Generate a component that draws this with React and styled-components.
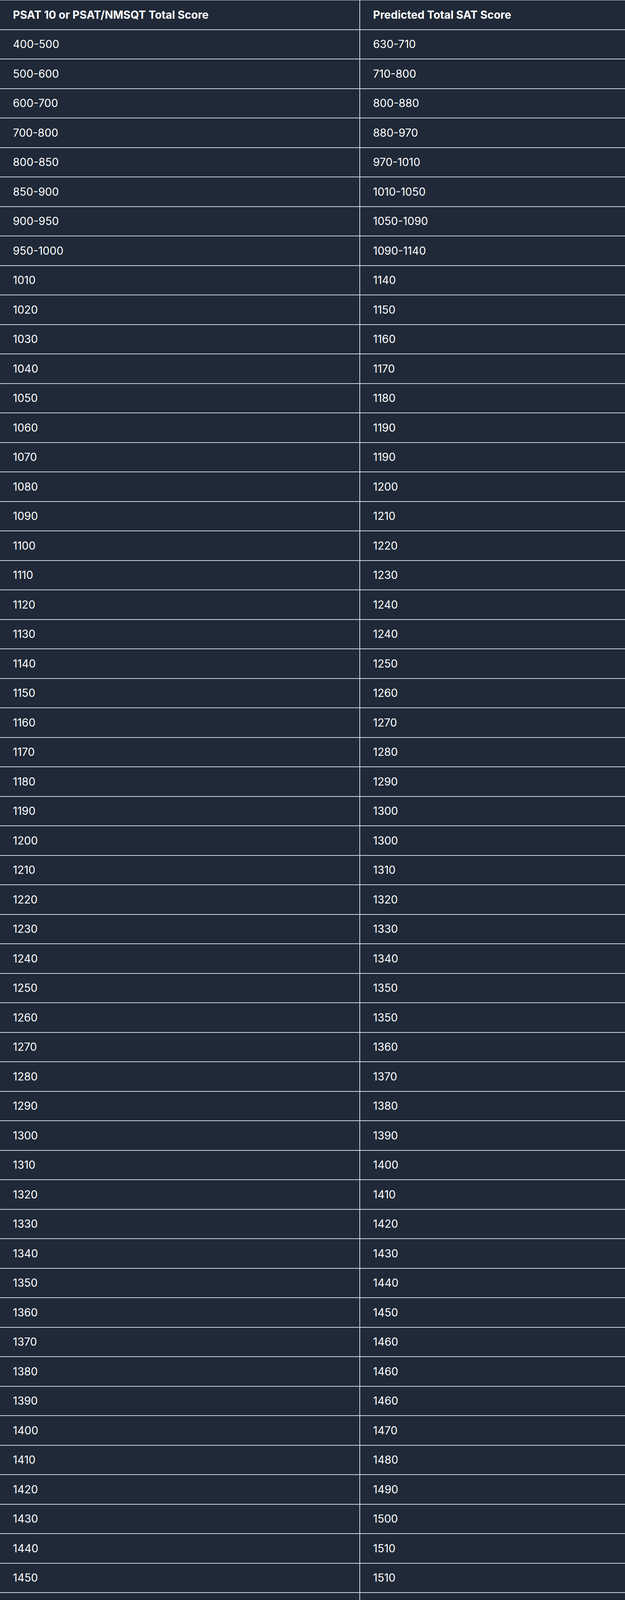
import React from 'react';
import styled, { createGlobalStyle } from 'styled-components';

const GlobalStyle = createGlobalStyle`
  html, body {
    margin: 0;
    padding: 0;
    background: #1f2937;
  }
  body {
    font-family: Inter, "Noto Sans", "Liberation Sans", sans-serif;
    color: #ffffff;
  }
`;

const rows = [
  ['400-500', '630-710'],
  ['500-600', '710-800'],
  ['600-700', '800-880'],
  ['700-800', '880-970'],
  ['800-850', '970-1010'],
  ['850-900', '1010-1050'],
  ['900-950', '1050-1090'],
  ['950-1000', '1090-1140'],
  ['1010', '1140'],
  ['1020', '1150'],
  ['1030', '1160'],
  ['1040', '1170'],
  ['1050', '1180'],
  ['1060', '1190'],
  ['1070', '1190'],
  ['1080', '1200'],
  ['1090', '1210'],
  ['1100', '1220'],
  ['1110', '1230'],
  ['1120', '1240'],
  ['1130', '1240'],
  ['1140', '1250'],
  ['1150', '1260'],
  ['1160', '1270'],
  ['1170', '1280'],
  ['1180', '1290'],
  ['1190', '1300'],
  ['1200', '1300'],
  ['1210', '1310'],
  ['1220', '1320'],
  ['1230', '1330'],
  ['1240', '1340'],
  ['1250', '1350'],
  ['1260', '1350'],
  ['1270', '1360'],
  ['1280', '1370'],
  ['1290', '1380'],
  ['1300', '1390'],
  ['1310', '1400'],
  ['1320', '1410'],
  ['1330', '1420'],
  ['1340', '1430'],
  ['1350', '1440'],
  ['1360', '1450'],
  ['1370', '1460'],
  ['1380', '1460'],
  ['1390', '1460'],
  ['1400', '1470'],
  ['1410', '1480'],
  ['1420', '1490'],
  ['1430', '1500'],
  ['1440', '1510'],
  ['1450', '1510'],
  ['1460', '1520'],
  ['1470', '1530'],
  ['1480', '1540'],
  ['1490', '1550'],
  ['1500', '1560'],
  ['1510', '1570'],
  ['1520', '1570'],
];

// score table: header + 60 rows, 75.5px pitch (73.5 + 2px rule)
const Table = styled.div`
  width: 1600px;
  display: flex;
  flex-direction: column;
  border-top: 1px solid #d1d5db;
  background: #1f2937;
`;

const Row = styled.div`
  display: flex;
  height: 73.5px;
  border-bottom: 2px solid #d1d5db;
`;

const Cell = styled.div`
  display: flex;
  align-items: center;
  padding-left: 33px;
  font-size: 28px;
  font-weight: ${(p) => (p.$head ? 700 : 400)};
  line-height: 34px;
  color: #ffffff;
  white-space: nowrap;
  &:first-child {
    flex: none;
    width: 922px;
    box-sizing: border-box;
    border-right: 2px solid #d1d5db;
  }
  &:last-child {
    flex: 1;
  }
`;

export default function App() {
  return (
    <>
      <GlobalStyle />
      <Table role="table">
        <Row role="row">
          <Cell role="columnheader" $head>PSAT 10 or PSAT/NMSQT Total Score</Cell>
          <Cell role="columnheader" $head>Predicted Total SAT Score</Cell>
        </Row>
        {rows.map(([psat, sat]) => (
          <Row role="row" key={psat}>
            <Cell role="cell">{psat}</Cell>
            <Cell role="cell">{sat}</Cell>
          </Row>
        ))}
      </Table>
    </>
  );
}
